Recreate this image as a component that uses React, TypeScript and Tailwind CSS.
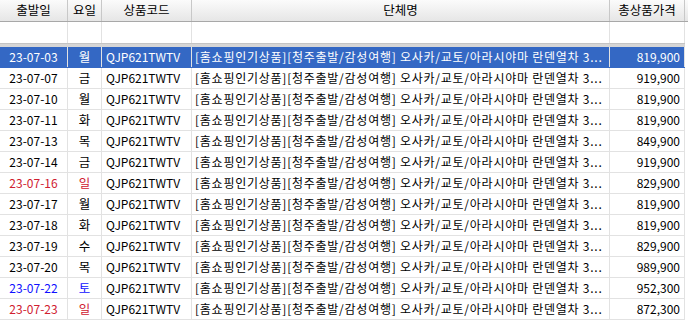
import React from 'react';

type Row = { date: string; day: string; price: string; tone?: 'red' | 'blue' };

const rows: Row[] = [
  { date: '23-07-03', day: '월', price: '819,900' },
  { date: '23-07-07', day: '금', price: '919,900' },
  { date: '23-07-10', day: '월', price: '819,900' },
  { date: '23-07-11', day: '화', price: '819,900' },
  { date: '23-07-13', day: '목', price: '849,900' },
  { date: '23-07-14', day: '금', price: '919,900' },
  { date: '23-07-16', day: '일', price: '829,900', tone: 'red' },
  { date: '23-07-17', day: '월', price: '819,900' },
  { date: '23-07-18', day: '화', price: '819,900' },
  { date: '23-07-19', day: '수', price: '829,900' },
  { date: '23-07-20', day: '목', price: '989,900' },
  { date: '23-07-22', day: '토', price: '952,300', tone: 'blue' },
  { date: '23-07-23', day: '일', price: '872,300', tone: 'red' },
];

// 화면에 보이는 그대로 (잘린 상태)
const name = '[홈쇼핑인기상품][청주출발/감성여행] 오사카/교토/아라시야마 란덴열차 3...';

const cell = 'border-r border-[#e2e2e2] flex items-center overflow-hidden whitespace-nowrap';

const App: React.FC = () => {
  return (
    <div
      className="w-[688px] h-[323px] bg-white overflow-hidden text-[12px] text-black"
      style={{ fontFamily: '"Noto Sans CJK KR", "Noto Sans", sans-serif' }}
    >
      {/* 헤더 */}
      <div className="flex h-[22px] border-b border-[#a8a8a8] bg-gradient-to-b from-[#fbfbfb] to-[#e6e6e6] text-[12.5px]">
        <div className="w-[68px] border-r border-[#c8c8c8] flex items-center justify-center">출발일</div>
        <div className="w-[34px] border-r border-[#c8c8c8] flex items-center justify-center">요일</div>
        <div className="w-[90px] border-r border-[#c8c8c8] flex items-center justify-center">상품코드</div>
        <div className="w-[418px] border-r border-[#c8c8c8] flex items-center justify-center">단체명</div>
        <div className="w-[75px] border-r border-[#c8c8c8] flex items-center justify-center">총상품가격</div>
      </div>

      {/* 빈 행 */}
      <div className="flex h-[21px]">
        <div className="w-[68px] border-r border-[#e2e2e2]" />
        <div className="w-[34px] border-r border-[#e2e2e2]" />
        <div className="w-[90px] border-r border-[#e2e2e2]" />
        <div className="w-[418px] border-r border-[#e2e2e2]" />
        <div className="w-[75px] border-r border-[#e2e2e2]" />
      </div>
      <div className="h-[4px] w-[685px] bg-[#d6d6d6] border-t border-[#c4c4c4]" />

      {/* 데이터 */}
      {rows.map((r, i) => {
        const sel = i === 0;
        const tone = sel
          ? 'text-white'
          : r.tone === 'red'
          ? 'text-[#d02030]'
          : r.tone === 'blue'
          ? 'text-[#1010ff]'
          : 'text-black';
        return (
          <div
            key={r.date}
            className={`flex h-[21px] w-[685px] border-b ${sel ? 'bg-[#3468c4] text-white border-[#3468c4]' : 'border-[#e2e2e2]'}`}
          >
            <div className={`${cell} w-[68px] justify-center ${tone}`}>{r.date}</div>
            <div className={`${cell} w-[34px] justify-center text-[12.5px] ${tone}`}>{r.day}</div>
            <div className={`${cell} w-[90px] pl-[4px]`}>QJP621TWTV</div>
            <div className={`${cell} w-[418px] pl-[3px]`}>
              <span className="tracking-[0.75px]">{name}</span>
            </div>
            <div className={`${cell} w-[75px] justify-end pr-[4px]`}>{r.price}</div>
          </div>
        );
      })}
    </div>
  );
};

export default App;
